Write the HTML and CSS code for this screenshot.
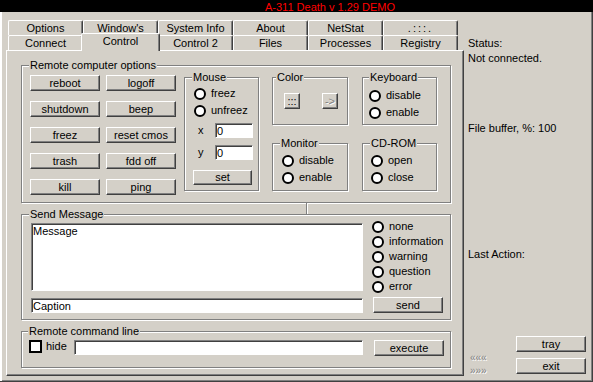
FILE: index.html
```html
<!DOCTYPE html>
<html lang="en">
<head>
    <meta charset="UTF-8">
    <title>A-311 Death v 1.29 DEMO</title>
    <link rel="stylesheet" href="styles.css">
</head>
<body>
    <div class="titlebar">A-311 Death v 1.29 DEMO</div>
    <div class="window">
        <div class="tabset">
            <div class="tab-row">
                <div class="tab">Options</div>
                <div class="tab">Window's</div>
                <div class="tab">System Info</div>
                <div class="tab">About</div>
                <div class="tab">NetStat</div>
                <div class="tab tab-dots">.:::.</div>
            </div>
            <div class="tab-row">
                <div class="tab">Connect</div>
                <div class="tab tab-active">Control</div>
                <div class="tab">Control 2</div>
                <div class="tab">Files</div>
                <div class="tab">Processes</div>
                <div class="tab">Registry</div>
            </div>
            <div class="panel">
                <div class="group group-options">
                    <div class="group-title">Remote computer options</div>
                    <div class="options-body">
                        <div class="cmd-grid">
                            <button class="btn">reboot</button>
                            <button class="btn">logoff</button>
                            <button class="btn">shutdown</button>
                            <button class="btn">beep</button>
                            <button class="btn">freez</button>
                            <button class="btn">reset cmos</button>
                            <button class="btn">trash</button>
                            <button class="btn">fdd off</button>
                            <button class="btn">kill</button>
                            <button class="btn">ping</button>
                        </div>
                        <div class="group group-mouse">
                            <div class="group-title">Mouse</div>
                            <div class="group-body mouse-body">
                                <label class="radio radio-first"><span class="dot"></span>freez</label>
                                <label class="radio"><span class="dot"></span>unfreez</label>
                                <div class="coord coord-x"><span class="coord-label">x</span><input class="edit coord-input" type="text" value="0"></div>
                                <div class="coord coord-y"><span class="coord-label">y</span><input class="edit coord-input" type="text" value="0"></div>
                                <button class="btn btn-set">set</button>
                            </div>
                        </div>
                        <div class="small-groups">
                            <div class="group">
                                <div class="group-title title-color">Color</div>
                                <div class="group-body color-body">
                                    <button class="btn btn-small">:::</button>
                                    <button class="btn btn-small btn-disabled">-&gt;</button>
                                </div>
                            </div>
                            <div class="group">
                                <div class="group-title title-keyboard">Keyboard</div>
                                <div class="group-body keyboard-body">
                                    <label class="radio"><span class="dot"></span>disable</label>
                                    <label class="radio"><span class="dot"></span>enable</label>
                                </div>
                            </div>
                            <div class="group">
                                <div class="group-title">Monitor</div>
                                <div class="group-body monitor-body">
                                    <label class="radio"><span class="dot"></span>disable</label>
                                    <label class="radio"><span class="dot"></span>enable</label>
                                </div>
                            </div>
                            <div class="group">
                                <div class="group-title">CD-ROM</div>
                                <div class="group-body cdrom-body">
                                    <label class="radio"><span class="dot"></span>open</label>
                                    <label class="radio"><span class="dot"></span>close</label>
                                </div>
                            </div>
                        </div>
                    </div>
                </div>
                <div class="splitter"></div>
                <div class="group group-message">
                    <div class="group-title">Send Message</div>
                    <div class="message-body">
                        <div class="message-left">
                            <textarea class="edit message-text">Message</textarea>
                            <input class="edit caption-input" type="text" value="Caption">
                        </div>
                        <div class="message-right">
                            <label class="radio radio-tight"><span class="dot"></span>none</label>
                            <label class="radio radio-tight"><span class="dot"></span>information</label>
                            <label class="radio radio-tight"><span class="dot"></span>warning</label>
                            <label class="radio radio-tight"><span class="dot"></span>question</label>
                            <label class="radio radio-tight"><span class="dot"></span>error</label>
                            <button class="btn btn-send">send</button>
                        </div>
                    </div>
                </div>
                <div class="group group-cmdline">
                    <div class="group-title title-cmdline">Remote command line</div>
                    <div class="cmd-row">
                        <span class="check"></span>
                        <span class="hide-label">hide</span>
                        <input class="edit cmd-input" type="text" value="">
                        <button class="btn btn-execute">execute</button>
                    </div>
                </div>
            </div>
        </div>
        <div class="side">
            <div class="side-line">Status:</div>
            <div class="side-line status-value">Not connected.</div>
            <div class="side-line buffer">File buffer, %: 100</div>
            <div class="side-line last-action">Last Action:</div>
            <div class="side-bottom">
                <div class="arrows">
                    <div>&laquo;&laquo;&laquo;</div>
                    <div>&raquo;&raquo;&raquo;</div>
                </div>
                <div class="side-buttons">
                    <button class="btn btn-side">tray</button>
                    <button class="btn btn-side">exit</button>
                </div>
            </div>
        </div>
    </div>
</body>
</html>
```

FILE: styles.css
```css
body {
    margin: 0;
    width: 593px;
    height: 382px;
    overflow: hidden;
    background-color: #d4d0c8;
    font-family: "Liberation Sans", Arial, sans-serif;
    font-size: 11px;
    line-height: 13px;
    color: #000;
}
.titlebar {
    height: 11px;
    padding: 1px 0 0 265px;
    line-height: 12px;
    background-color: #000;
    color: #f00;
    white-space: nowrap;
    overflow: hidden;
}
.window {
    display: flex;
    align-items: flex-start;
    height: 370px;
    box-sizing: border-box;
    padding-top: 8px;
    box-shadow: inset -1px -1px 0 #404040, inset 2px 0 0 #fff, inset -2px -2px 0 #808080;
}

/* tabs */
.tabset {
    margin-left: 6px;
    width: 458px;
    flex: none;
}
.tab-row {
    display: flex;
    height: 15px;
    padding-left: 2px;
}
.tab {
    flex: none;
    width: 75px;
    height: 15px;
    box-sizing: border-box;
    padding-top: 1px;
    border-top: 1px solid #fff;
    border-left: 1px solid #fff;
    border-right: 1px solid #404040;
    border-radius: 2px 2px 0 0;
    box-shadow: inset -1px 0 0 #808080;
    text-align: center;
    white-space: nowrap;
}
.tab-dots {
    letter-spacing: 2px;
}
.tab-active {
    position: relative;
    z-index: 1;
    width: 79px;
    height: 18px;
    margin: -2px -2px 0;
    background-color: #d4d0c8;
}
.panel {
    height: 326px;
    box-sizing: border-box;
    padding: 14px 0 0 14px;
    border: 1px solid;
    border-color: #fff #404040 #404040 #fff;
    box-shadow: inset -1px -1px 0 #808080;
}

/* group boxes */
.group {
    box-sizing: border-box;
    border: 1px solid #808080;
    box-shadow: inset 1px 1px 0 #fff, 1px 1px 0 #fff;
    flex: none;
}
.group-title {
    width: fit-content;
    height: 13px;
    margin: -7px 0 -6px 7px;
    padding: 0 1px;
    background-color: #d4d0c8;
    white-space: nowrap;
}
.title-color {
    margin-left: 3px;
}
.title-keyboard {
    margin-left: 6px;
}
.title-cmdline {
    margin-left: 6px;
}
.group-options {
    width: 430px;
    height: 138px;
}
.options-body {
    display: flex;
    align-items: flex-start;
}
.cmd-grid {
    display: grid;
    grid-template-columns: 70px 70px;
    grid-auto-rows: 16px;
    column-gap: 6px;
    row-gap: 10px;
    margin: 9px 0 0 8px;
}

/* controls */
.btn {
    box-sizing: border-box;
    margin: 0;
    padding: 0;
    font: inherit;
    line-height: 13px;
    color: #000;
    background-color: #d4d0c8;
    border: 1px solid;
    border-color: #fff #404040 #404040 #fff;
    box-shadow: inset -1px -1px 0 #808080;
    white-space: nowrap;
}
.btn-disabled {
    color: #808080;
    text-shadow: 1px 1px 0 #fff;
}
.edit {
    box-sizing: border-box;
    margin: 0;
    padding: 0 1px;
    font: inherit;
    line-height: 13px;
    color: #000;
    background-color: #fff;
    border: 1px solid;
    border-color: #808080 #fff #fff #808080;
    box-shadow: inset 1px 1px 0 #404040;
    outline: none;
}
.radio {
    display: flex;
    align-items: center;
    height: 15px;
    margin-top: 2px;
    white-space: nowrap;
}
.radio:first-child,
.radio-tight {
    margin-top: 0;
}
.dot {
    flex: none;
    width: 12px;
    height: 12px;
    box-sizing: border-box;
    margin-right: 5px;
    border: 2px solid #000;
    border-radius: 50%;
    background-color: #fff;
}
.check {
    flex: none;
    width: 13px;
    height: 13px;
    box-sizing: border-box;
    border: 2px solid #000;
    background-color: #fff;
}

/* mouse */
.group-mouse {
    width: 75px;
    height: 114px;
    margin: 11px 0 0 8px;
}
.mouse-body {
    padding: 8px 0 0 9px;
}
.coord {
    display: flex;
    align-items: center;
    padding-left: 4px;
}
.coord-x {
    margin-top: 5px;
}
.coord-y {
    margin-top: 7px;
}
.coord-label {
    width: 17px;
}
.coord-input {
    width: 38px;
    height: 15px;
}
.btn-set {
    display: block;
    width: 59px;
    height: 15px;
    margin: 10px 0 0 -1px;
}

/* small groups */
.small-groups {
    display: grid;
    grid-template-columns: 76px 75px;
    grid-template-rows: 48px 48px;
    column-gap: 14px;
    row-gap: 18px;
    margin: 11px 0 0 13px;
}
.small-groups .group {
    height: 48px;
}
.color-body {
    display: flex;
    gap: 22px;
    padding: 15px 0 0 11px;
}
.btn-small {
    width: 16px;
    height: 16px;
}
.keyboard-body {
    padding: 10px 0 0 6px;
}
.monitor-body {
    padding: 9px 0 0 9px;
}
.cdrom-body {
    padding: 9px 0 0 8px;
}

.splitter {
    width: 0;
    height: 11px;
    margin-left: 285px;
    border-left: 1px solid #808080;
    border-right: 1px solid #fff;
}

/* send message */
.group-message {
    width: 430px;
    height: 106px;
}
.message-body {
    display: flex;
    padding-left: 9px;
}
.message-left {
    width: 332px;
    margin-top: 8px;
}
.message-text {
    display: block;
    width: 332px;
    height: 68px;
    padding: 1px;
    resize: none;
    overflow: hidden;
}
.caption-input {
    display: block;
    width: 332px;
    height: 15px;
    margin-top: 7px;
}
.message-right {
    margin: 4px 0 0 9px;
}
.btn-send {
    display: block;
    width: 70px;
    height: 16px;
    margin: 3px 0 0 1px;
}

/* command line */
.group-cmdline {
    width: 430px;
    height: 37px;
    margin-top: 11px;
}
.cmd-row {
    display: flex;
    align-items: flex-start;
    margin-top: 8px;
    padding-left: 7px;
}
.hide-label {
    width: 28px;
    margin-left: 4px;
}
.cmd-input {
    width: 289px;
    height: 15px;
}
.btn-execute {
    width: 70px;
    height: 16px;
    margin-left: 11px;
}

/* right side */
.side {
    width: 123px;
    margin-left: 4px;
    padding-top: 17px;
}
.side-line {
    height: 13px;
    white-space: nowrap;
}
.status-value {
    margin-top: 2px;
}
.buffer {
    margin-top: 57px;
}
.last-action {
    margin-top: 113px;
}
.side-bottom {
    display: flex;
    margin-top: 75px;
}
.arrows {
    width: 46px;
    padding: 15px 0 0 2px;
    font-size: 10px;
    line-height: 13px;
    color: #808080;
    text-shadow: 1px 1px 0 #fff;
}
.side-buttons {
    display: flex;
    flex-direction: column;
    gap: 6px;
}
.btn-side {
    width: 70px;
    height: 16px;
}
```
